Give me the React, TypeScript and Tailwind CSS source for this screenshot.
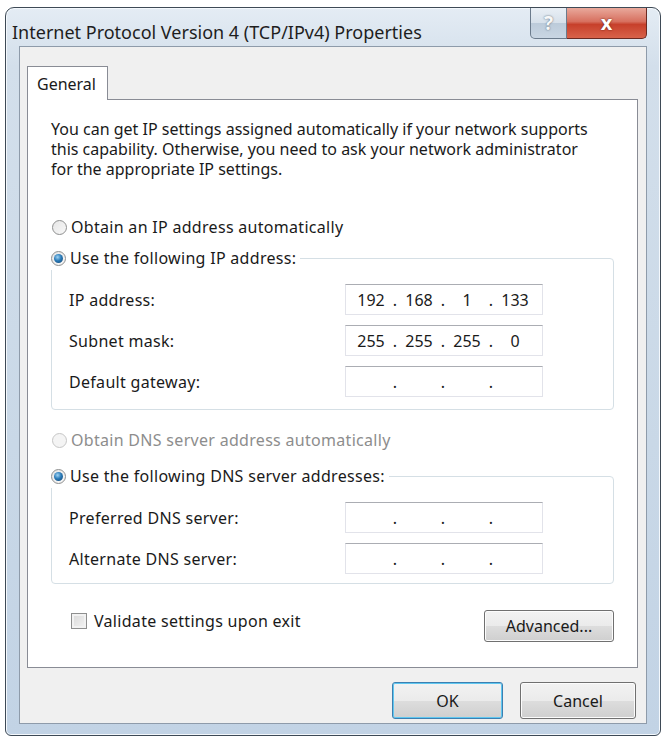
import React from 'react';

const font = { fontFamily: '"Noto Sans", "Open Sans", sans-serif' };

const Radio: React.FC<{ checked?: boolean; disabled?: boolean }> = ({ checked, disabled }) => (
  <span
    className={`relative inline-flex h-[15px] w-[15px] shrink-0 items-center justify-center rounded-full border ${
      disabled ? 'border-[#c6c6c6] bg-[#f4f4f4]' : 'border-[#8e8f8f] bg-gradient-to-br from-[#e6e6e6] to-[#f8f8f8]'
    }`}
  >
    {checked && (
      <span className="h-[9px] w-[9px] rounded-full bg-[radial-gradient(circle_at_40%_35%,#9fd4f4_0%,#2b7bb8_45%,#0d3e6b_100%)]" />
    )}
  </span>
);

const IpBox: React.FC<{ parts?: string[] }> = ({ parts = ['', '', '', ''] }) => (
  <div className="flex h-[31px] w-[198px] items-center border border-[#e2e3ea] border-t-[#abadb3] bg-white pl-[6px] text-[#1a1a1a]">
    {parts.map((p, i) => (
      <React.Fragment key={i}>
        <span className="w-[38px] text-center">{p}</span>
        {i < 3 && <span className="w-[10px] text-center">.</span>}
      </React.Fragment>
    ))}
  </div>
);

const Row: React.FC<{ label: string; parts?: string[] }> = ({ label, parts }) => (
  <div className="flex items-center justify-between pl-[17px] pr-[70px]">
    <span className="tracking-[0.3px]">{label}</span>
    <IpBox parts={parts} />
  </div>
);

const GroupBox: React.FC<{ legend: string; children: React.ReactNode; className?: string }> = ({ legend, children, className }) => (
  <fieldset className={`rounded-[4px] border border-[#d5dfe5] ${className ?? ''}`}>
    <legend className="ml-[-1px] flex items-center gap-[4px] bg-white pr-[4px]">
      <Radio checked />
      <span className="tracking-[0.3px]">{legend}</span>
    </legend>
    {children}
  </fieldset>
);

const WinButton: React.FC<{ children: React.ReactNode; focused?: boolean; className?: string }> = ({ children, focused, className }) => (
  <button
    className={`flex items-center justify-center rounded-[3px] border bg-[linear-gradient(to_bottom,#f2f2f2_0%,#ebebeb_50%,#dddddd_51%,#cfcfcf_100%)] text-[16px] text-[#1a1a1a] ${
      focused ? 'border-[#3c7fb1] shadow-[inset_0_0_0_1px_#5fc7f0]' : 'border-[#707070] shadow-[inset_0_0_0_1px_#fcfcfc]'
    } ${className ?? ''}`}
  >
    {children}
  </button>
);

export default function App() {
  return (
    <div className="h-[740px] w-[662px] overflow-hidden bg-white" style={font}>
      <div className="ml-[5px] mt-[7px] flex h-[729px] w-[656px] flex-col rounded-t-[9px] rounded-b-[6px] border border-[#3e4a56] bg-[linear-gradient(to_bottom,#e4ecf4_0%,#d3dfeb_8%,#c9d8e7_60%,#c2d3e5_100%)] shadow-[inset_0_0_0_1px_#f4f8fc]">
        {/* title bar */}
        <div className="flex h-[38px] shrink-0 items-start justify-between">
          <span className="mt-[14px] pl-[6px] text-[18px] leading-[20px] text-[#1e1e1e]">
            Internet Protocol Version 4 (TCP/IPv4) Properties
          </span>
          <div className="mr-[13px] flex h-[31px]">
            <div className="flex w-[37px] items-center justify-center rounded-bl-[5px] border border-t-0 border-[#6b7b8c] bg-[linear-gradient(to_bottom,#e9eff5_0%,#d6e0ea_50%,#bccbda_51%,#c9d6e3_100%)] text-[19px] font-bold text-[#f8f8f8] [text-shadow:0_0_2px_#4a5a6a]">
              ?
            </div>
            <div className="flex w-[80px] items-center justify-center rounded-br-[5px] border border-l-0 border-t-0 border-[#6b2a22] bg-[linear-gradient(to_bottom,#e9a99c_0%,#d7705f_45%,#c7402b_55%,#d8624a_100%)] text-[20px] font-bold text-white [text-shadow:0_0_2px_#5a1a10]">
              x
            </div>
          </div>
        </div>

        {/* client area */}
        <div className="mx-[13px] mb-[11px] flex flex-1 flex-col border border-[#8e9baa] bg-[#f0f0f0] px-[7px] pt-[19px] text-[16px] text-[#1a1a1a]">
          <div className="flex">
            <div className="relative z-10 -mb-px flex h-[34px] w-[81px] items-center border border-b-0 border-[#898c95] bg-white pl-[9px]">
              General
            </div>
          </div>
          <div className="flex h-[569px] w-[611px] flex-col border border-[#898c95] bg-white px-[23px] pt-[19px]">
            <p className="leading-[20px]">
              You can get IP settings assigned automatically if your network supports
              <br />
              this capability. Otherwise, you need to ask your network administrator
              <br />
              for the appropriate IP settings.
            </p>

            <label className="mt-[36px] flex items-center gap-[4px] pl-[1px]">
              <Radio />
              <span className="tracking-[0.3px]">Obtain an IP address automatically</span>
            </label>

            <GroupBox legend="Use the following IP address:" className="mt-[7px] pb-[12px] pt-[14px]">
              <div className="flex flex-col gap-[10px]">
                <Row label="IP address:" parts={['192', '168', '1', '133']} />
                <Row label="Subnet mask:" parts={['255', '255', '255', '0']} />
                <Row label="Default gateway:" />
              </div>
            </GroupBox>

            <label className="mt-[18px] flex items-center gap-[4px] pl-[1px] text-[#8d8d8d]">
              <Radio disabled />
              <span className="tracking-[0.3px]">Obtain DNS server address automatically</span>
            </label>

            <GroupBox legend="Use the following DNS server addresses:" className="mt-[12px] pb-[9px] pt-[14px]">
              <div className="flex flex-col gap-[10px]">
                <Row label="Preferred DNS server:" />
                <Row label="Alternate DNS server:" />
              </div>
            </GroupBox>

            <div className="mt-[25px] flex items-start justify-between pl-[20px]">
              <label className="flex items-center gap-[7px]">
                <span className="h-[16px] w-[16px] border border-[#8e8f8f] bg-[linear-gradient(135deg,#d8d8d8_0%,#f4f4f4_100%)] shadow-[inset_0_0_0_2px_#f2f2f2]" />
                <span className="tracking-[0.3px]">Validate settings upon exit</span>
              </label>
              <WinButton className="mt-[1px] h-[32px] w-[130px]">Advanced...</WinButton>
            </div>
          </div>

          <div className="mt-[14px] flex justify-end gap-[17px] pr-[3px]">
            <WinButton focused className="h-[37px] w-[111px]">
              OK
            </WinButton>
            <WinButton className="h-[37px] w-[116px]">Cancel</WinButton>
          </div>
        </div>
      </div>
    </div>
  );
}
